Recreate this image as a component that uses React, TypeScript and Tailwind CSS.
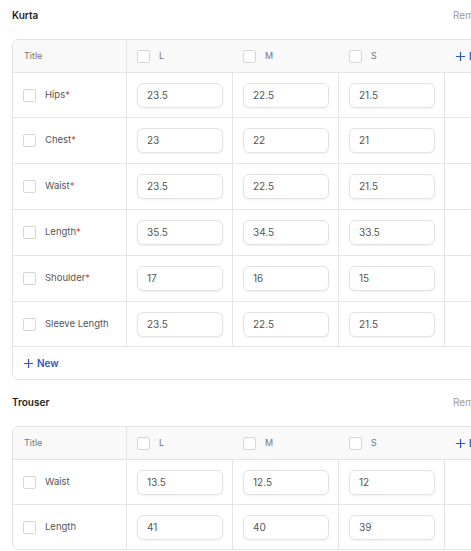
import React from "react";

type Row = { label: string; required?: boolean; values: string[] };

type SizeChart = {
  title: string;
  sizes: string[];
  rows: Row[];
  showNew?: boolean;
};

const charts: SizeChart[] = [
  {
    title: "Kurta",
    sizes: ["L", "M", "S"],
    showNew: true,
    rows: [
      { label: "Hips", required: true, values: ["23.5", "22.5", "21.5"] },
      { label: "Chest", required: true, values: ["23", "22", "21"] },
      { label: "Waist", required: true, values: ["23.5", "22.5", "21.5"] },
      { label: "Length", required: true, values: ["35.5", "34.5", "33.5"] },
      { label: "Shoulder", required: true, values: ["17", "16", "15"] },
      { label: "Sleeve Length", values: ["23.5", "22.5", "21.5"] },
    ],
  },
  {
    title: "Trouser",
    sizes: ["L", "M", "S"],
    rows: [
      { label: "Waist", values: ["13.5", "12.5", "12"] },
      { label: "Length", values: ["41", "40", "39"] },
    ],
  },
];

const cols = "grid grid-cols-[114px_106px_106px_106px_1fr]";

function Checkbox() {
  return (
    <span className="block w-[13px] h-[13px] shrink-0 rounded-[2px] border border-[#d6d6d6] bg-white" />
  );
}

function PlusIcon({ className }: { className?: string }) {
  return (
    <svg viewBox="0 0 12 12" className={className} fill="none" stroke="currentColor" strokeWidth="1.3">
      <path d="M6 1v10M1 6h10" />
    </svg>
  );
}

function Chart({ chart }: { chart: SizeChart }) {
  const last = chart.rows.length - 1;
  return (
    <section>
      <div className="flex items-center justify-between h-[31px] mb-2">
        <h2 className="text-[10px] font-semibold text-[#1f1f1f]">{chart.title}</h2>
        <button className="text-[10px] text-[#9a9a9a] pr-[14px]">Remove</button>
      </div>
      <div className="border border-[#e4e4e4] rounded-md overflow-hidden">
        <div className={`${cols} h-[32px] bg-[#f9f9f9] text-[9px] text-[#777]`}>
          <div className="flex items-center pl-[11px] border-r border-[#e4e4e4]">Title</div>
          {chart.sizes.map((s) => (
            <div key={s} className="flex items-center gap-[9px] pl-[10px]">
              <Checkbox />
              <span>{s}</span>
            </div>
          ))}
          <div className="flex items-center gap-[3px] pl-[10px] text-[10px] font-semibold text-[#2d55c4]">
            <PlusIcon className="w-[11px] h-[11px]" />
            <span>New</span>
          </div>
        </div>
        {chart.rows.map((row, r) => (
          <div
            key={row.label}
            className={`${cols} ${r === 0 || r === last ? "h-[45px]" : "h-[46px]"} border-t border-[#e4e4e4]`}
          >
            <div className="flex items-center gap-[9px] pl-[10px] border-r border-[#e4e4e4] text-[9.5px] text-[#555]">
              <Checkbox />
              <span>
                {row.label}
                {row.required && <span className="text-[#e0454a]">*</span>}
              </span>
            </div>
            {row.values.map((v, i) => (
              <div key={i} className="flex items-center pl-[10px] border-r border-[#e4e4e4]">
                <div className="w-[86px] h-[25px] flex items-center px-[9px] rounded-md border border-[#e2e2e2] bg-white shadow-[0_1px_2px_rgba(0,0,0,0.06)] text-[10px] text-[#555]">
                  {v}
                </div>
              </div>
            ))}
            <div />
          </div>
        ))}
        {chart.showNew && (
          <div className="flex items-center gap-[3px] h-[33px] pl-[10px] border-t border-[#e4e4e4] text-[10px] font-semibold text-[#2d55c4]">
            <PlusIcon className="w-[11px] h-[11px]" />
            <span>New</span>
          </div>
        )}
      </div>
    </section>
  );
}

export default function App() {
  return (
    <div className="w-[471px] h-[551px] overflow-hidden bg-white font-['Inter',sans-serif]">
      <div className="w-[505px] pl-3 flex flex-col gap-[7px]">
        {charts.map((c) => (
          <Chart key={c.title} chart={c} />
        ))}
      </div>
    </div>
  );
}
